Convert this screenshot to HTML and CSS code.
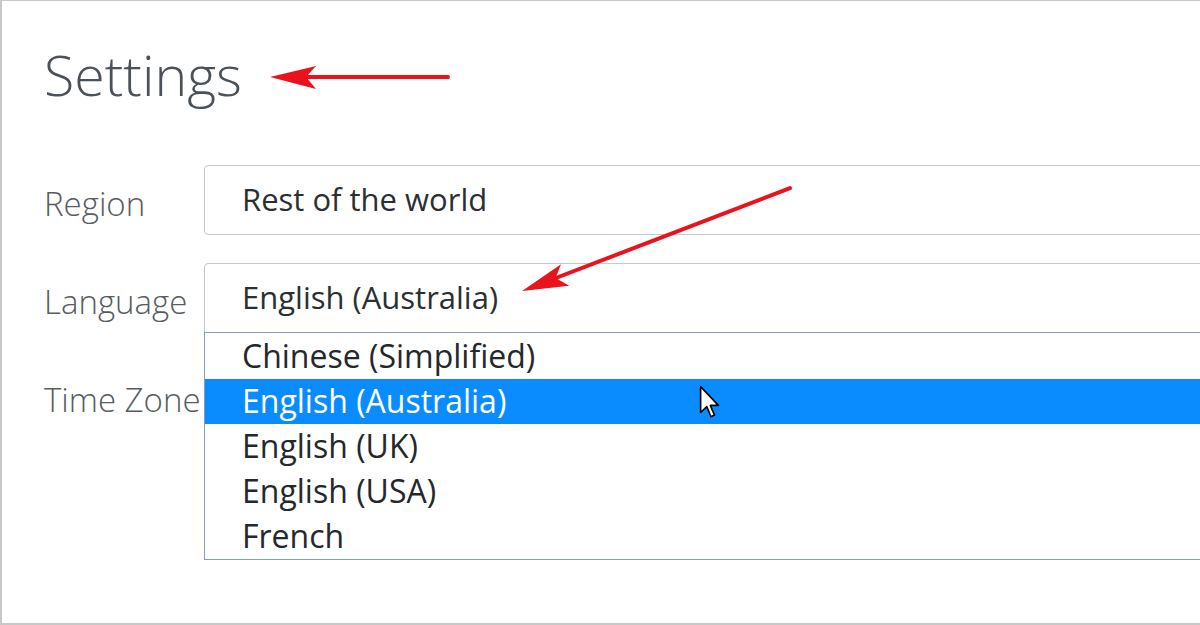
FILE: index.html
```html
<!DOCTYPE html>
<html lang="en">

<head>
  <meta charset="utf-8">
  <title>Settings</title>
  <link rel="stylesheet" href="styles.css">
</head>

<body>
  <div id="frame">
    <h1 id="title">Settings</h1>
    <div id="form">
      <label class="label">Region</label>
      <div class="field">Rest of the world</div>

      <label class="label">Language</label>
      <div class="field open">
        English (Australia)
        <ul id="menu">
          <li class="opt">Chinese (Simplified)</li>
          <li class="opt sel">
            English (Australia)
            <svg id="cursor" viewBox="0 0 13 21" width="21" height="34">
              <path d="M1 1 L1 17 L4.8 13.4 L7.4 19.6 L9.6 18.6 L7 12.6 L12 12.6 Z" fill="#fff" stroke="#000" stroke-width="1" stroke-linejoin="round" />
            </svg>
          </li>
          <li class="opt">English (UK)</li>
          <li class="opt">English (USA)</li>
          <li class="opt">French</li>
        </ul>
      </div>

      <label class="label">Time Zone</label>
      <div class="field"></div>
    </div>

    <!-- annotation arrows -->
    <svg id="marks" width="1200" height="625" viewBox="0 0 1200 625">
      <g transform="translate(270 77)">
        <line x1="30" y1="0" x2="178" y2="0" stroke="#e8131c" stroke-width="4" stroke-linecap="round" />
        <path d="M0 0 L46 -11 L36 0 L46 12 Z" fill="#e8131c" />
      </g>
      <g transform="translate(522 291) rotate(-21)">
        <line x1="30" y1="0" x2="287" y2="0" stroke="#e8131c" stroke-width="4" stroke-linecap="round" />
        <path d="M0 0 L46 -11 L36 0 L46 12 Z" fill="#e8131c" />
      </g>
    </svg>
  </div>
</body>

</html>
```

FILE: styles.css
```css
* {
  box-sizing: border-box;
  margin: 0;
  padding: 0
}

html,
body {
  width: 1200px;
  height: 625px;
  overflow: hidden;
  background: #fff
}

body {
  font-family: 'Open Sans', 'Liberation Sans', sans-serif;
  -webkit-font-smoothing: antialiased
}

#frame {
  position: relative;
  width: 1400px;
  height: 625px;
  border: 2px solid #c8c8c8;
  border-top-width: 1px;
  border-right: none;
  padding-left: 42px;
  padding-top: 42px
}

#title {
  font-size: 55.5px;
  font-weight: 300;
  line-height: 64px;
  color: #4b5158;
  margin-bottom: 58px
}

#form {
  display: grid;
  grid-template-columns: 160px 1fr;
  row-gap: 28px;
  align-items: center
}

.label {
  font-size: 33px;
  font-weight: 300;
  color: #565c63;
  white-space: nowrap;
  padding-top: 6px
}

.field {
  position: relative;
  height: 70px;
  border: 1px solid #c4c8ce;
  border-radius: 4px;
  padding-left: 37px;
  display: flex;
  align-items: center;
  font-size: 31px;
  color: #2b2f34;
  background: #fff;
  padding-bottom: 3px
}

.open {
  border-bottom-left-radius: 0;
  border-bottom-right-radius: 0;
  z-index: 2
}

#menu {
  position: absolute;
  top: 68px;
  left: -1px;
  right: -1px;
  list-style: none;
  background: #fff;
  border: 1px solid #7f9fd4;
  padding-top: 1px
}

.opt {
  position: relative;
  height: 45px;
  line-height: 44px;
  padding-left: 37px;
  font-size: 32px;
  color: #24282d
}

.sel {
  background: #0a8cfe;
  color: #fff
}

#cursor {
  position: absolute;
  left: 494px;
  top: 6px
}

#marks {
  position: absolute;
  left: -2px;
  top: -1px;
  pointer-events: none;
  z-index: 5
}
```
